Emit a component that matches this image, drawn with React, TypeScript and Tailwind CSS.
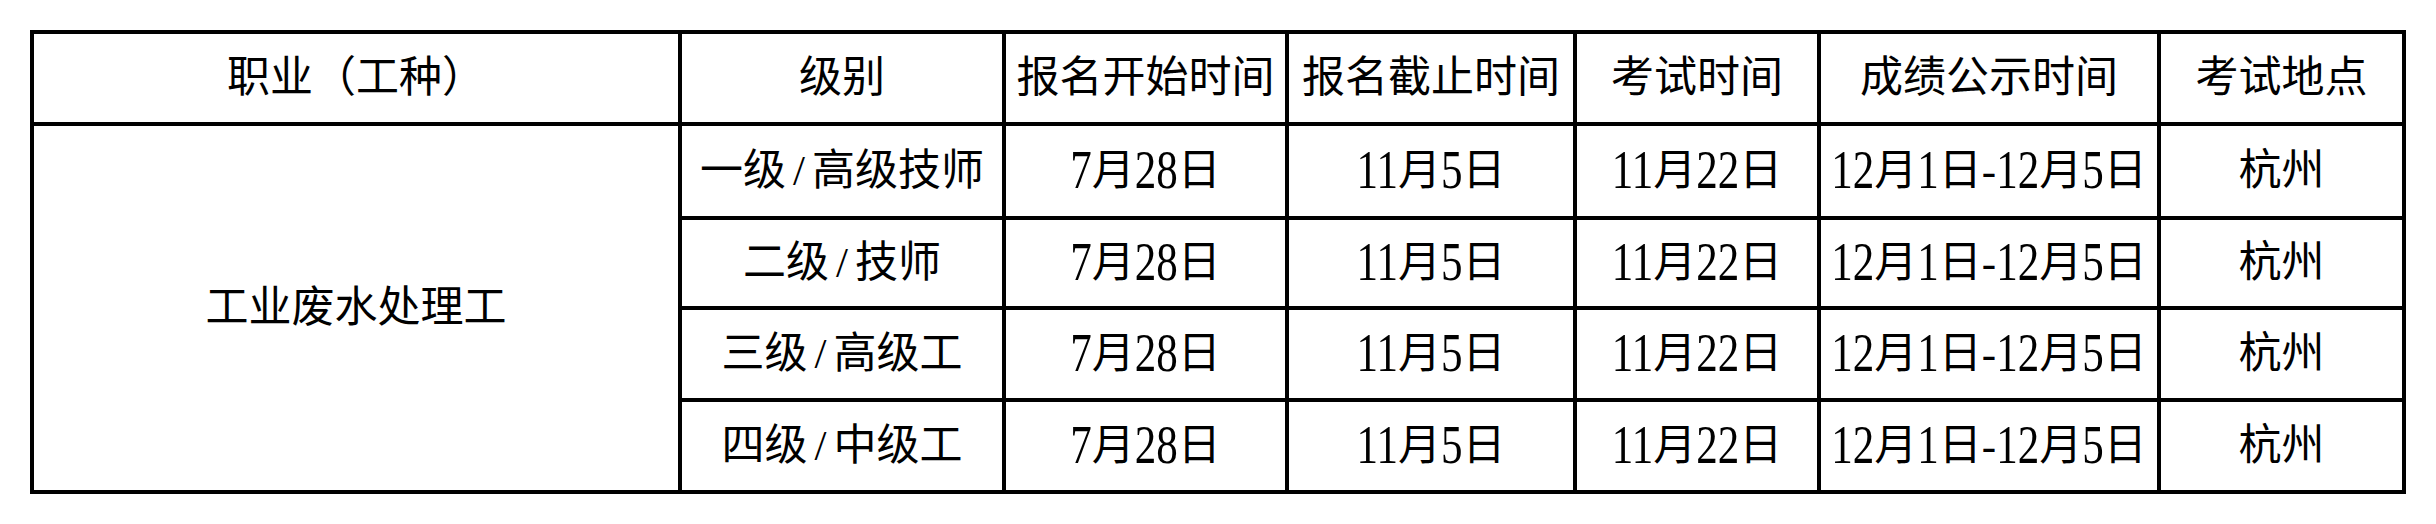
const headers = ["职业（工种）", "级别", "报名开始时间", "报名截止时间", "考试时间", "成绩公示时间", "考试地点"];

const rows = [
  ["一级/高级技师", "7月28日", "11月5日", "11月22日", "12月1日-12月5日", "杭州"],
  ["二级/技师", "7月28日", "11月5日", "11月22日", "12月1日-12月5日", "杭州"],
  ["三级/高级工", "7月28日", "11月5日", "11月22日", "12月1日-12月5日", "杭州"],
  ["四级/中级工", "7月28日", "11月5日", "11月22日", "12月1日-12月5日", "杭州"],
];

// digits in the source are tall and narrow, so stretch them a bit
const renderText = (text: string) =>
  text.split(/(\d+|\/)/).map((part, i) => {
    if (/^\d+$/.test(part))
      return (
        <span key={i} className="inline-block leading-none scale-y-[1.3] origin-[50%_70%]">
          {part}
        </span>
      );
    if (part === "/")
      return (
        <span key={i} className="mx-[7px]">
          /
        </span>
      );
    return <span key={i}>{part}</span>;
  });

const Cell = ({ children, className = "" }: { children: React.ReactNode; className?: string }) => (
  <div className={`bg-white flex items-center justify-center whitespace-nowrap ${className}`}>
    {children}
  </div>
);

export default function App() {
  return (
    <div className="min-h-screen bg-white pt-[30px] pl-[30px] text-black text-[43px] font-['Liberation_Serif','Noto_Sans_CJK_SC',serif]">
      <div className="w-fit grid grid-cols-[644px_320px_279px_284px_240px_336px_241px] grid-rows-[88px_90px_86px_88px_88px] gap-[4px] p-[4px] bg-black">
        {headers.map((h) => (
          <Cell key={h}>{h}</Cell>
        ))}

        <Cell className="row-span-4">工业废水处理工</Cell>

        {rows.map((row, r) =>
          row.map((value, c) => <Cell key={`${r}-${c}`}>{renderText(value)}</Cell>)
        )}
      </div>
    </div>
  );
}
